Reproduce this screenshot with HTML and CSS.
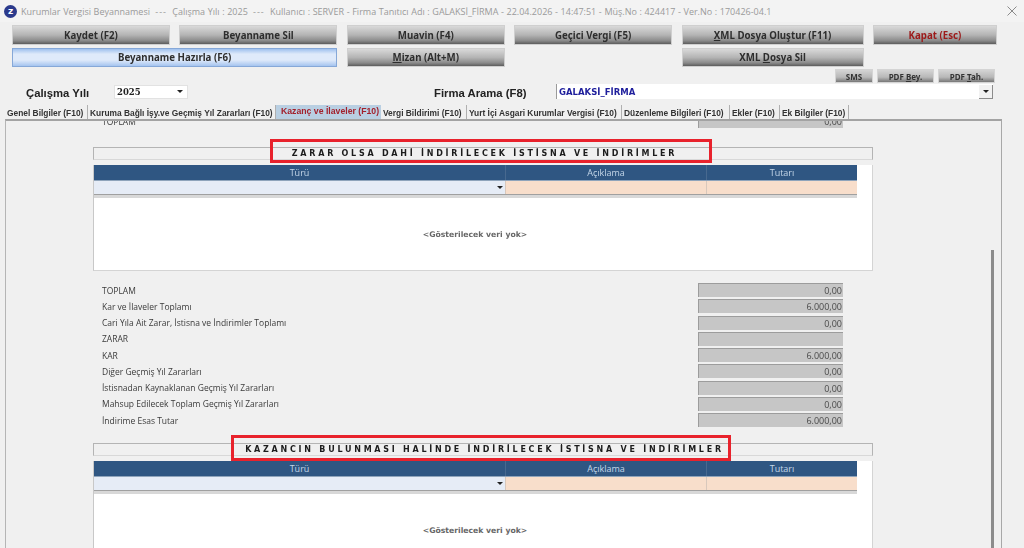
FILE: index.html
```html
<!DOCTYPE html>
<html lang="tr">
<head>
    <meta charset="UTF-8">
    <meta name="viewport" content="width=device-width, initial-scale=1.0">
    <title>Kurumlar Vergisi Beyannamesi</title>
    <link rel="stylesheet" href="styles.css">
</head>
<body>
    <div class="titlebar">
        <div class="app-logo">z</div>
        <div class="title-text">Kurumlar Vergisi Beyannamesi &nbsp;<span class="sep">---</span>&nbsp; Çalışma Yılı : 2025 &nbsp;<span class="sep">---</span>&nbsp; Kullanıcı : SERVER - Firma Tanıtıcı Adı : GALAKSİ_FİRMA - 22.04.2026 - 14:47:51 - Müş.No : 424417 - Ver.No : 170426-04.1</div>
        <svg class="close-icon" width="10" height="10" viewBox="0 0 10 10"><path d="M.5.5l9 9M9.5.5l-9 9" stroke="#8a8a8a" fill="none"/></svg>
    </div>

    <div class="toolbar">
        <button class="btn">Kaydet (F2)</button>
        <button class="btn">Beyanname Sil</button>
        <button class="btn">Muavin (F4)</button>
        <button class="btn">Geçici Vergi (F5)</button>
        <button class="btn"><u>X</u>ML Dosya Oluştur (F11)</button>
        <button class="btn btn-close">Kapat (Esc)</button>
        <button class="btn btn-blue wide">Beyanname Hazırla (F6)</button>
        <button class="btn"><u>M</u>izan (Alt+M)</button>
        <button class="btn col-5">XML <u>D</u>osya Sil</button>
    </div>

    <div class="small-buttons">
        <button class="btn-small">SMS</button>
        <button class="btn-small pdf">PDF <u>B</u>ey.</button>
        <button class="btn-small pdf">PDF <u>T</u>ah.</button>
    </div>

    <div class="search-row">
        <label class="year-label">Çalışma Yılı</label>
        <div class="year-select">2025<span class="arrow"></span></div>
        <label class="firm-label">Firma Arama (F8)</label>
        <div class="firm-select">GALAKSİ_FİRMA<span class="arrow-box"><span class="arrow"></span></span></div>
    </div>

    <div class="tabs">
        <a class="tab" style="width:83px">Genel Bilgiler (F10)</a>
        <a class="tab" style="width:188px">Kuruma Bağlı İşy.ve Geçmiş Yıl Zararları (F10)</a>
        <a class="tab active" style="width:105px">Kazanç ve İlaveler (F10)</a>
        <a class="tab" style="width:86px">Vergi Bildirimi (F10)</a>
        <a class="tab" style="width:155px">Yurt İçi Asgari Kurumlar Vergisi (F10)</a>
        <a class="tab" style="width:108px">Düzenleme Bilgileri (F10)</a>
        <a class="tab" style="width:50px">Ekler (F10)</a>
        <a class="tab" style="width:69px">Ek Bilgiler (F10)</a>
    </div>

    <div class="panel">
        <div class="panel-content">
            <div class="totals first">
                <div class="total-row"><span>TOPLAM</span><div class="field">0,00</div></div>
            </div>

            <div class="section-bar">
                <span class="section-title">ZARAR OLSA DAHİ İNDİRİLECEK İSTİSNA VE İNDİRİMLER</span>
                <div class="highlight highlight-a"></div>
            </div>
            <div class="grid-box">
                <div class="grid-head"><div>Türü</div><div>Açıklama</div><div>Tutarı</div></div>
                <div class="grid-input"><div class="cell-type"><span class="arrow"></span></div><div class="cell-text"></div><div class="cell-text"></div></div>
                <div class="grid-foot"></div>
                <div class="empty-text">&lt;Gösterilecek veri yok&gt;</div>
            </div>

            <div class="totals">
                <div class="total-row"><span>TOPLAM</span><div class="field">0,00</div></div>
                <div class="total-row"><span>Kar ve İlaveler Toplamı</span><div class="field">6.000,00</div></div>
                <div class="total-row"><span>Cari Yıla Ait Zarar, İstisna ve İndirimler Toplamı</span><div class="field">0,00</div></div>
                <div class="total-row"><span>ZARAR</span><div class="field"></div></div>
                <div class="total-row"><span>KAR</span><div class="field">6.000,00</div></div>
                <div class="total-row"><span>Diğer Geçmiş Yıl Zararları</span><div class="field">0,00</div></div>
                <div class="total-row"><span>İstisnadan Kaynaklanan Geçmiş Yıl Zararları</span><div class="field">0,00</div></div>
                <div class="total-row"><span>Mahsup Edilecek Toplam Geçmiş Yıl Zararları</span><div class="field">0,00</div></div>
                <div class="total-row"><span>İndirime Esas Tutar</span><div class="field">6.000,00</div></div>
            </div>

            <div class="section-bar second">
                <span class="section-title">KAZANCIN BULUNMASI HALİNDE İNDİRİLECEK İSTİSNA VE İNDİRİMLER</span>
                <div class="highlight highlight-b"></div>
            </div>
            <div class="grid-box">
                <div class="grid-head"><div>Türü</div><div>Açıklama</div><div>Tutarı</div></div>
                <div class="grid-input"><div class="cell-type"><span class="arrow"></span></div><div class="cell-text"></div><div class="cell-text"></div></div>
                <div class="grid-foot"></div>
                <div class="empty-text">&lt;Gösterilecek veri yok&gt;</div>
            </div>
        </div>
        <div class="scroll-thumb"></div>
    </div>
</body>
</html>
```

FILE: styles.css
```css
html, body {
    height: 548px;
    overflow: hidden;
}
body {
    margin: 0;
    font-family: 'Open Sans', sans-serif;
    background: #f0f0f0;
    color: #333;
    filter: blur(0.35px);
}
button {
    padding: 0;
    font-family: 'Noto Sans', sans-serif;
    font-weight: bold;
    cursor: pointer;
}

/* title bar */
.titlebar {
    height: 22px;
    display: flex;
    align-items: center;
    padding-left: 4px;
    background: #f3f3f3;
}
.app-logo {
    width: 13px;
    height: 13px;
    border-radius: 50%;
    background: #2b3a8c;
    color: white;
    font: bold 9px/12px 'DejaVu Sans', sans-serif;
    text-align: center;
}
.title-text {
    margin-left: 4px;
    font-size: 9px;
    word-spacing: 0.3px;
    color: #9a9a9a;
    white-space: nowrap;
}
.sep {
    letter-spacing: 1px;
}
.close-icon {
    margin-left: auto;
    margin-right: 7px;
}

/* buttons */
.toolbar {
    display: grid;
    grid-template-columns: 158px 158px 158px 158px 182px 124px;
    grid-template-rows: 20px 19px;
    column-gap: 9.4px;
    row-gap: 3px;
    margin: 3px 0 0 12px;
}
.btn {
    border: 1px solid #cfcfcf;
    background: linear-gradient(to bottom, #d9d9d9 0%, #b4b4b4 50%, #8a8a8a 82%, #5c5c5c 100%);
    color: #2e2e2e;
    font-size: 9.7px;
}
.btn-close {
    color: #9c1a1a;
}
.btn-blue {
    border: 1px solid #86a8d8;
    background: linear-gradient(to bottom, #9fc1ee 0%, #dfeafa 30%, #dfeafa 65%, #a5c4ef 100%);
}
.wide {
    grid-column: span 2;
}
.col-5 {
    grid-column: 5;
}
.small-buttons {
    display: flex;
    justify-content: flex-end;
    gap: 4px;
    margin: 2px 29px 0 0;
}
.btn-small {
    width: 38px;
    height: 14px;
    border: 1px solid #d4d4d4;
    background: linear-gradient(to bottom, #d4d4d4 0%, #b8b8b8 60%, #777 100%);
    color: #333;
    font-size: 8px;
}
.btn-small.pdf {
    width: 57px;
}

/* search row */
.search-row {
    height: 15px;
    margin-top: 1px;
    display: flex;
    align-items: center;
    font-family: 'Liberation Sans', sans-serif;
}
.year-label,
.firm-label {
    font-size: 11.3px;
    font-weight: bold;
    color: #222;
    position: relative;
    top: 1px;
}
.year-label {
    margin-left: 26px;
    width: 88px;
}
.firm-label {
    margin-left: 246px;
    width: 122px;
}
.year-select {
    width: 74px;
    height: 14px;
    display: flex;
    align-items: center;
    justify-content: space-between;
    box-sizing: border-box;
    padding: 0 4px 0 2px;
    background: white;
    border: 1px solid #e2e2e2;
    font: bold 8.5px 'DejaVu Serif', serif;
    color: #222;
}
.firm-select {
    width: 437px;
    height: 15px;
    display: flex;
    align-items: center;
    justify-content: space-between;
    box-sizing: border-box;
    padding-left: 2px;
    background: white;
    border-left: 1px solid #9a9a9a;
    font: bold 8.5px 'DejaVu Sans', sans-serif;
    color: #1e1e9c;
}
.arrow-box {
    width: 13px;
    height: 13px;
    display: flex;
    align-items: center;
    justify-content: center;
    border: 1px solid #8c8c8c;
    border-width: 0 1px 1px 0;
    background: #f2f2f2;
}
.arrow {
    width: 0;
    height: 0;
    border-left: 3px solid transparent;
    border-right: 3px solid transparent;
    border-top: 3px solid #222;
}

/* tabs */
.tabs {
    height: 14px;
    margin: 6px 0 0 5px;
    display: flex;
}
.tab {
    box-sizing: border-box;
    padding-left: 2px;
    height: 14px;
    border-right: 1px solid #b0b0b0;
    font: bold 8.4px/16px 'Liberation Sans', sans-serif;
    color: #333;
    white-space: nowrap;
}
.tab.active {
    background: #b9cfe2;
    color: #a3212c;
    padding-left: 5px;
    border-right: none;
    font-size: 8.7px;
    line-height: 12px;
}

/* tab page */
.panel {
    position: relative;
    height: 428px;
    margin: 0 22px 0 5px;
    border-top: 2px solid #a3a3a3;
    border-left: 1px solid #b5b5b5;
    border-right: 1px solid #a8a8a8;
    overflow: hidden;
}
.panel-content {
    width: 780px;
    margin-left: 87px;
}
.scroll-thumb {
    position: absolute;
    right: 7px;
    top: 129px;
    bottom: 0;
    width: 3px;
    background: #8c8c8c;
}
.totals {
    display: grid;
    row-gap: 2.25px;
    margin: 12px 30px 0 9px;
}
.totals.first {
    margin-top: -7px;
}
.total-row {
    height: 14px;
    display: flex;
    align-items: center;
    justify-content: space-between;
    font-size: 8.5px;
    color: #3a3a3a;
    font-family: 'Open Sans', sans-serif;
}
.field {
    box-sizing: border-box;
    width: 145px;
    height: 14px;
    padding-right: 1px;
    background: #c6c6c6;
    border-top: 1px solid #9c9c9c;
    border-left: 1px solid #9c9c9c;
    text-align: right;
    line-height: 13px;
    font-size: 9px;
    color: #4a4a4a;
}

/* sections */
.section-bar {
    position: relative;
    box-sizing: border-box;
    height: 13px;
    margin-top: 19px;
    padding-left: 3px;
    border: 1px solid #b4b4b4;
    border-bottom-color: #d8d8d8;
    display: flex;
    align-items: center;
    justify-content: center;
}
.section-bar.second {
    margin-top: 16px;
}
.section-title {
    font: bold 8px 'DejaVu Sans', sans-serif;
    letter-spacing: 2.75px;
    color: #1c1c1c;
    white-space: nowrap;
}
.highlight {
    position: absolute;
    box-sizing: border-box;
    border: 3px solid #e8222c;
}
.highlight-a {
    left: 176px;
    top: -9px;
    width: 442px;
    height: 24px;
}
.highlight-b {
    left: 137px;
    top: -9px;
    width: 500px;
    height: 26px;
}

/* data grid */
.grid-box {
    margin-top: 5px;
    height: 106px;
    background: white;
    box-sizing: border-box;
    border-right: 1px solid #d4d4d4;
    border-bottom: 1px solid #d4d4d4;
    border-left: 1px solid #c8c8c8;
    position: relative;
}
.grid-head,
.grid-input {
    width: 763px;
    display: grid;
    grid-template-columns: 411px 201px 151px;
}
.grid-head {
    height: 15px;
    background: #2f5682;
    color: #c4d6e8;
    font-size: 9px;
    line-height: 15px;
    text-align: center;
}
.grid-head div + div {
    border-left: 1px solid #48698f;
}
.grid-input {
    height: 13px;
    border-top: 1px solid #8fa4bb;
}
.cell-type {
    background: #e6ecf6;
    display: flex;
    align-items: center;
    justify-content: flex-end;
    padding-right: 2px;
}
.cell-text {
    background: #f8decb;
    border-left: 1px solid #d8c8bc;
}
.grid-foot {
    width: 763px;
    height: 4px;
    background: #d8d8d8;
    border-top: 1px solid #a0a0a0;
    box-sizing: border-box;
}
.empty-text {
    margin-top: 32px;
    text-align: center;
    font: bold 7.7px 'DejaVu Sans', sans-serif;
    color: #666;
    padding-right: 16px;
}
```
